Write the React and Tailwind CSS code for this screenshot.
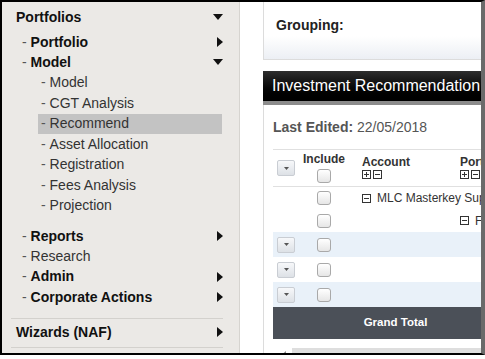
import React from 'react';

const Down = () => (
  <svg width="10" height="6" viewBox="0 0 10 6"><path d="M0 0h10L5 6z" fill="#111" /></svg>
);
const Right = () => (
  <svg width="6" height="10" viewBox="0 0 6 10"><path d="M0 0l6 5-6 5z" fill="#111" /></svg>
);

const Box = ({ plus }) => (
  <svg width="9" height="9" viewBox="0 0 9 9">
    <rect x="0.5" y="0.5" width="8" height="8" fill="#fff" stroke="#333" />
    <path d="M2 4.5h5" stroke="#333" />
    {plus && <path d="M4.5 2v5" stroke="#333" />}
  </svg>
);

const Check = () => (
  <div className="w-[14px] h-[14px] rounded-[3px] border border-[#a9a9a9] bg-gradient-to-b from-white to-[#e6e6e6]" />
);

const Drop = () => (
  <div className="w-[18px] h-[16px] border border-[#c9cdd3] rounded-[2px] bg-gradient-to-b from-[#f7f8fa] to-[#dde1e6] flex items-center justify-center">
    <svg width="5" height="3" viewBox="0 0 5 3"><path d="M0 0h5L2.5 3z" fill="#555" /></svg>
  </div>
);

const subs = ['Model', 'CGT Analysis', 'Recommend', 'Asset Allocation', 'Registration', 'Fees Analysis', 'Projection'];

function Header({ label, arrow, bold = true }) {
  return (
    <div className="h-[20.3px] flex items-center pl-[20px] pr-[16px]">
      <span className="text-[#555]">-&nbsp;</span>
      <span className={bold ? 'font-bold text-[#111]' : 'text-[#333]'}>{label}</span>
      <span className="ml-auto flex items-center">{arrow === 'down' ? <Down /> : arrow === 'right' ? <Right /> : null}</span>
    </div>
  );
}

function Row({ h, blue, drop, children }) {
  return (
    <div className={`flex items-center ${h} ${blue ? 'bg-[#e9f1f9]' : 'bg-white'}`}>
      <div className="w-[27px] pl-[4px] flex items-center">{drop && <Drop />}</div>
      <div className="w-[48px] flex justify-center"><Check /></div>
      {children}
    </div>
  );
}

export default function App() {
  return (
    <div className="w-[485px] h-[355px] flex border-t-2 border-l-2 border-b-2 border-black border-r-4 border-r-[#6a6a6a] font-['Liberation_Sans',Arial,sans-serif] text-[14px] overflow-hidden bg-white">
      {/* SIDEBAR */}
      <div className="w-[238px] shrink-0 bg-[#ebe9e6] border-r border-[#d6d4d0] pt-[5px]">
        <div className="h-5 flex items-center pl-[14px] pr-[16px] font-bold text-[#111]">
          Portfolios
          <span className="ml-auto"><Down /></span>
        </div>
        <div className="mt-[5px]">
          <Header label="Portfolio" arrow="right" />
          <Header label="Model" arrow="down" />
        </div>
        {subs.map((s) => (
          <div
            key={s}
            className={`h-[20.5px] flex items-center ml-[36px] mr-[17px] pl-[3px] text-[#333] ${s === 'Recommend' ? 'bg-[#c3c3c3]' : ''}`}
          >
            <span className="text-[#555]">-&nbsp;</span>{s}
          </div>
        ))}
        <div className="mt-[10px]">
          <Header label="Reports" arrow="right" />
          <Header label="Research" bold={false} />
          <Header label="Admin" arrow="right" />
          <Header label="Corporate Actions" arrow="right" />
        </div>
        <div className="mt-[11px] mx-[9px] mr-[16px] border-t border-[#d3d1cd]" />
        <div className="mt-[3px] h-5 flex items-center pl-[14px] pr-[16px] font-bold text-[#111]">
          Wizards (NAF)
          <span className="ml-auto"><Right /></span>
        </div>
        <div className="mt-[5px] mx-[9px] mr-[16px] border-t border-[#d3d1cd]" />
      </div>

      {/* MAIN */}
      <div className="flex-1 min-w-0 overflow-hidden pl-[23px] bg-white">
        <div className="h-[58px] border-l border-b border-[#dcdcdc] bg-gradient-to-b from-white from-60% to-[#eceff4] pl-[12px] pt-[13px] font-bold text-[#222]">
          Grouping:
        </div>
        <div className="mt-[11px] h-[30px] bg-gradient-to-b from-[#2e2e2e] to-black text-white text-[16px] pl-[9px] flex items-center whitespace-nowrap">
          Investment Recommendation
        </div>
        <div className="h-[4px] bg-[#8c8c8c]" />
        <div className="border-l border-[#dcdcdc] pl-[9px] h-[260px]">
          <div className="pt-[14px] leading-[16px] text-[#555] whitespace-nowrap">
            <span className="font-bold">Last Edited:</span> 22/05/2018
          </div>
          <div className="mt-[14px] w-[320px] text-[12px] text-[#333]">
            <div className="h-[38px] border-t border-b border-[#e0e0e0] flex">
              <div className="w-[27px] pl-[4px] pt-[10px]"><Drop /></div>
              <div className="w-[48px] flex flex-col items-center pt-[2px]">
                <span className="font-bold leading-[14px]">Include</span>
                <div className="mt-[3px]"><Check /></div>
              </div>
              <div className="w-[110px] pl-[14px] pt-[5px]">
                <div className="font-bold leading-[14px]">Account</div>
                <div className="mt-[1px] flex gap-[2px]"><Box plus /><Box /></div>
              </div>
              <div className="pl-[2px] pt-[5px]">
                <div className="font-bold leading-[14px]">Portfolio</div>
                <div className="mt-[1px] flex gap-[2px]"><Box plus /><Box /></div>
              </div>
            </div>
            <Row h="h-[22px]">
              <div className="pl-[14px] flex items-center gap-[6px] whitespace-nowrap"><Box /> MLC Masterkey Super</div>
            </Row>
            <Row h="h-[23px]">
              <div className="w-[110px]" />
              <div className="pl-[2px] flex items-center gap-[6px] whitespace-nowrap"><Box /> Fund</div>
            </Row>
            <Row h="h-[25px]" blue drop />
            <Row h="h-[25px]" drop />
            <Row h="h-[25px]" blue drop />
            <div className="h-[32px] bg-[#4b5058] flex items-center">
              <div className="w-[245px] text-center text-white font-bold text-[11.5px]">Grand Total</div>
            </div>
            <div className="mt-[9px] h-[10px] flex items-center">
              <div className="w-[19px] flex justify-end pr-[6px]">
                <svg width="3" height="5" viewBox="0 0 3 5"><path d="M3 0v5L0 2.5z" fill="#888" /></svg>
              </div>
              <div className="flex-1 h-full bg-[#dedede]" />
            </div>
          </div>
        </div>
      </div>
    </div>
  );
}
